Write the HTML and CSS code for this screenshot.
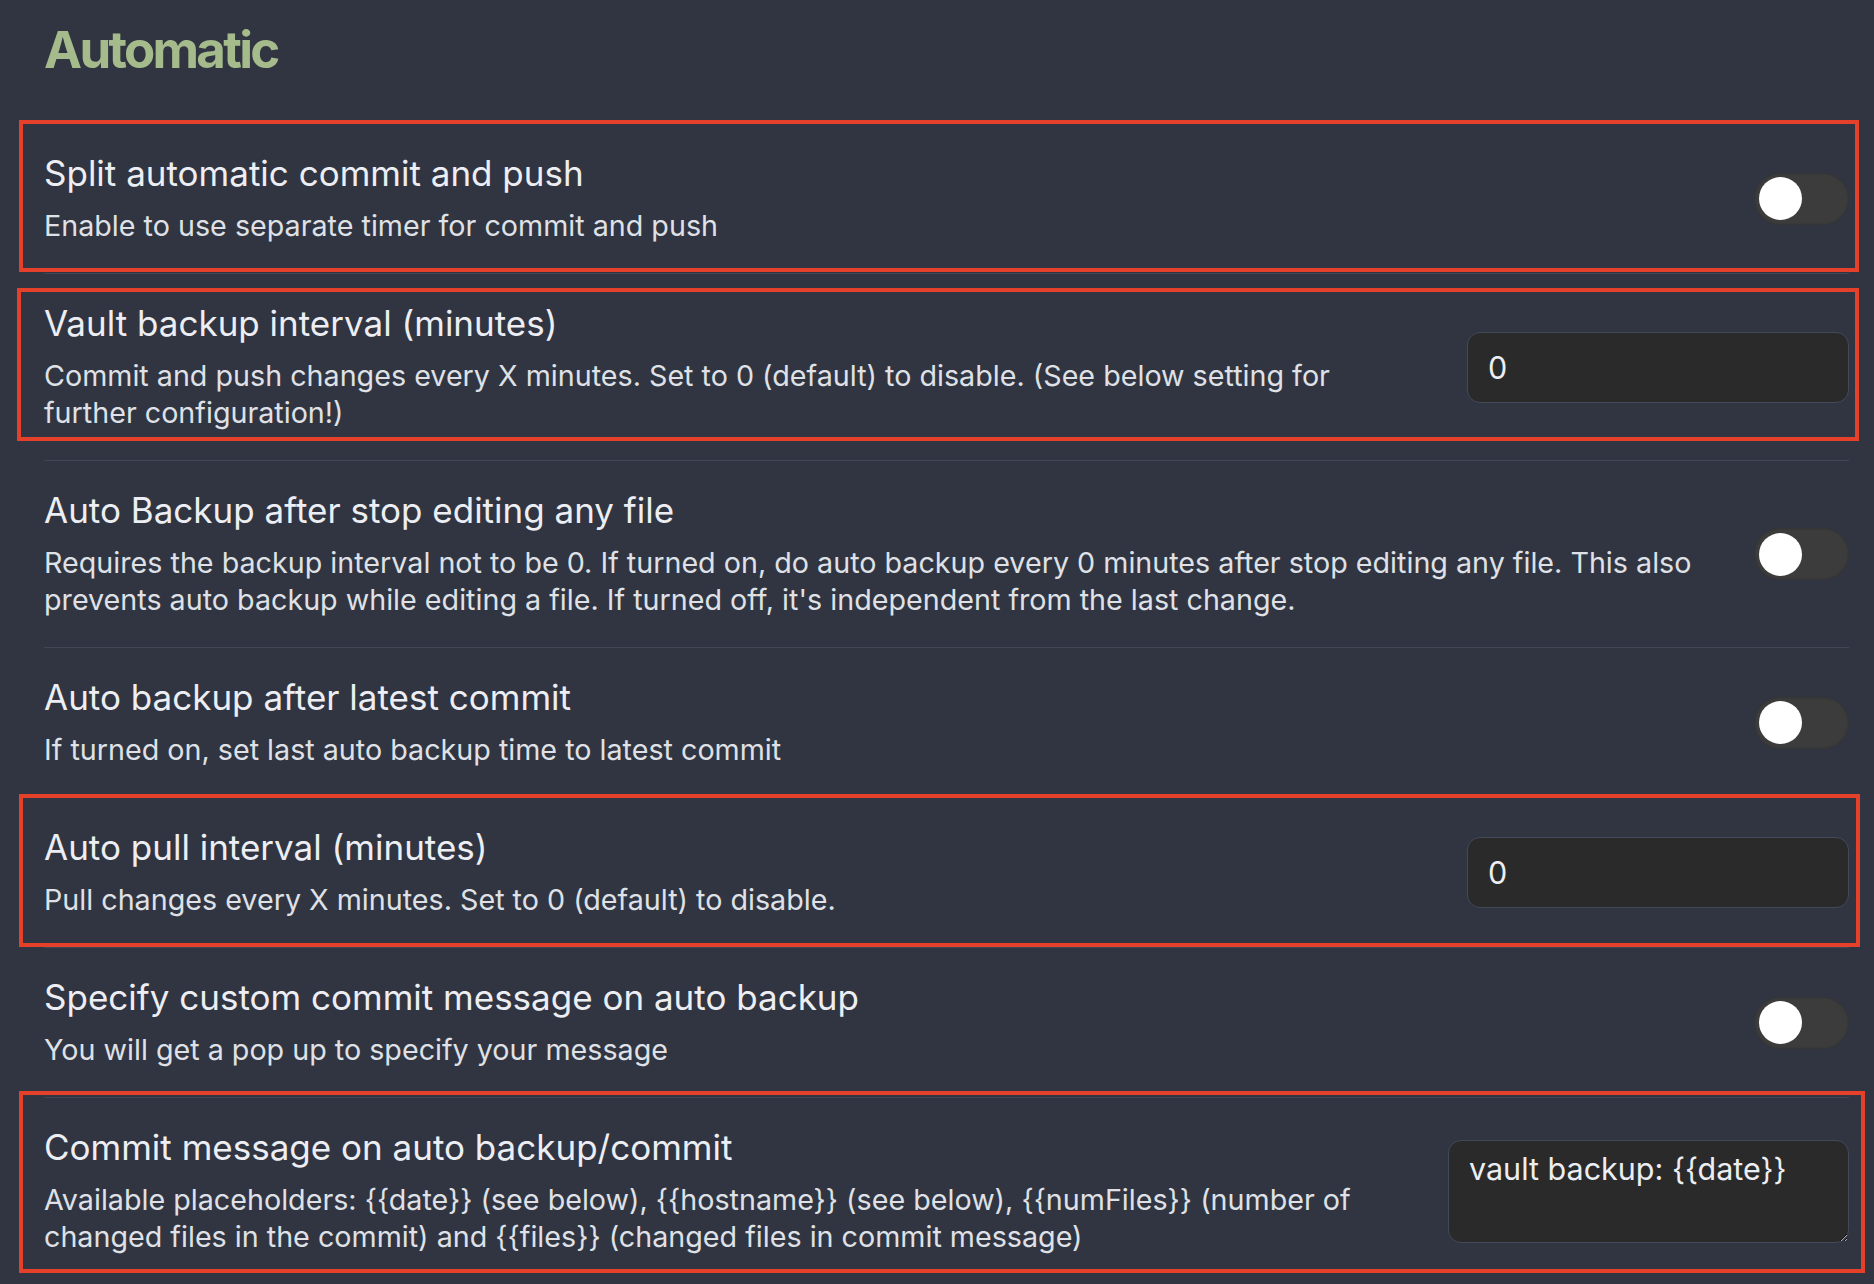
FILE: index.html
```html
<!DOCTYPE html>
<html lang="en">
<head>
<meta charset="utf-8">
<title>Automatic</title>
<link rel="stylesheet" href="styles.css">
</head>
<body>
<div class="settings">
  <h3 class="heading">Automatic</h3>

  <div class="item mark mark-a">
    <div class="info">
      <div class="name">Split automatic commit and push</div>
      <div class="desc">Enable to use separate timer for commit and push</div>
    </div>
    <div class="control"><div class="toggle"><span class="knob"></span></div></div>
  </div>

  <div class="item mark mark-b">
    <div class="info">
      <div class="name">Vault backup interval (minutes)</div>
      <div class="desc">Commit and push changes every X minutes. Set to 0 (default) to disable. (See below setting for further configuration!)</div>
    </div>
    <div class="control"><input class="text-input" type="text" value="0"></div>
  </div>

  <div class="item">
    <div class="info">
      <div class="name">Auto Backup after stop editing any file</div>
      <div class="desc">Requires the backup interval not to be 0. If turned on, do auto backup every 0 minutes after stop editing any file. This also prevents auto backup while editing a file. If turned off, it's independent from the last change.</div>
    </div>
    <div class="control"><div class="toggle"><span class="knob"></span></div></div>
  </div>

  <div class="item">
    <div class="info">
      <div class="name">Auto backup after latest commit</div>
      <div class="desc">If turned on, set last auto backup time to latest commit</div>
    </div>
    <div class="control"><div class="toggle"><span class="knob"></span></div></div>
  </div>

  <div class="item mark mark-c">
    <div class="info">
      <div class="name">Auto pull interval (minutes)</div>
      <div class="desc">Pull changes every X minutes. Set to 0 (default) to disable.</div>
    </div>
    <div class="control"><input class="text-input" type="text" value="0"></div>
  </div>

  <div class="item">
    <div class="info">
      <div class="name">Specify custom commit message on auto backup</div>
      <div class="desc">You will get a pop up to specify your message</div>
    </div>
    <div class="control"><div class="toggle"><span class="knob"></span></div></div>
  </div>

  <div class="item mark mark-d">
    <div class="info">
      <div class="name">Commit message on auto backup/commit</div>
      <div class="desc">Available placeholders: {{date}} (see below), {{hostname}} (see below), {{numFiles}} (number of changed files in the commit) and {{files}} (changed files in commit message)</div>
    </div>
    <div class="control"><textarea class="text-area">vault backup: {{date}}</textarea></div>
  </div>
</div>
</body>
</html>
```

FILE: styles.css
```css
html, body {
  margin: 0;
  padding: 0;
  background: #313541;
  color-scheme: dark;
}

body {
  font-family: Inter, "Noto Sans", "Liberation Sans", sans-serif;
  color: #e6e7ec;
  padding: 0 25px 0 44px;
}

.heading {
  margin: 20px 0 43px;
  font-size: 51px;
  line-height: 60px;
  font-weight: 700;
  color: #a5bb8b;
  letter-spacing: -2.7px;
}

.item {
  position: relative;
  display: flex;
  align-items: center;
  border-top: 1px solid #414757;
  padding: 29px 0 29px;
}

.info {
  flex: 1 1 auto;
  margin-right: 48px;
}

.name {
  font-size: 35px;
  line-height: 40px;
  color: #eceef3;
}

.desc {
  margin-top: 14px;
  font-size: 28.7px;
  line-height: 37px;
  color: #dfe1e7;
}

.control {
  flex: 0 0 auto;
  display: flex;
  align-items: center;
}

.toggle {
  position: relative;
  width: 95px;
  height: 52px;
  border-radius: 26px;
  background: #3c3c3c;
  box-shadow: inset 0 0 3px rgba(0, 0, 0, 0.25);
}

.knob {
  position: absolute;
  left: 5px;
  top: 4.5px;
  width: 43px;
  height: 43px;
  border-radius: 50%;
  background: #ffffff;
}

.text-input,
.text-area {
  box-sizing: border-box;
  background: #2a2a2a;
  border: 1px solid #424959;
  border-radius: 13px;
  color: #eceef3;
  font-family: Inter, "Noto Sans", "Liberation Sans", sans-serif;
  font-size: 30.5px;
  outline: none;
  margin: 0;
}

.text-input {
  width: 382px;
  height: 71px;
  padding: 0 20px;
}

.text-area {
  width: 401px;
  height: 103px;
  padding: 8px 20px;
  line-height: 40px;
  resize: both;
  display: block;
}

.mark::after {
  content: "";
  position: absolute;
  border: 4px solid #e5412a;
  pointer-events: none;
}

.mark-a::after { left: -25px; right: -10px; top: -4px; bottom: 1px; }
.mark-b::after { left: -27px; right: -10px; top: 14px; bottom: 19px; }
.mark-c::after { left: -25px; right: -11px; top: -4px; bottom: 0; }
.mark-d::after { left: -25px; right: -16px; top: -7px; bottom: 11px; }
```
